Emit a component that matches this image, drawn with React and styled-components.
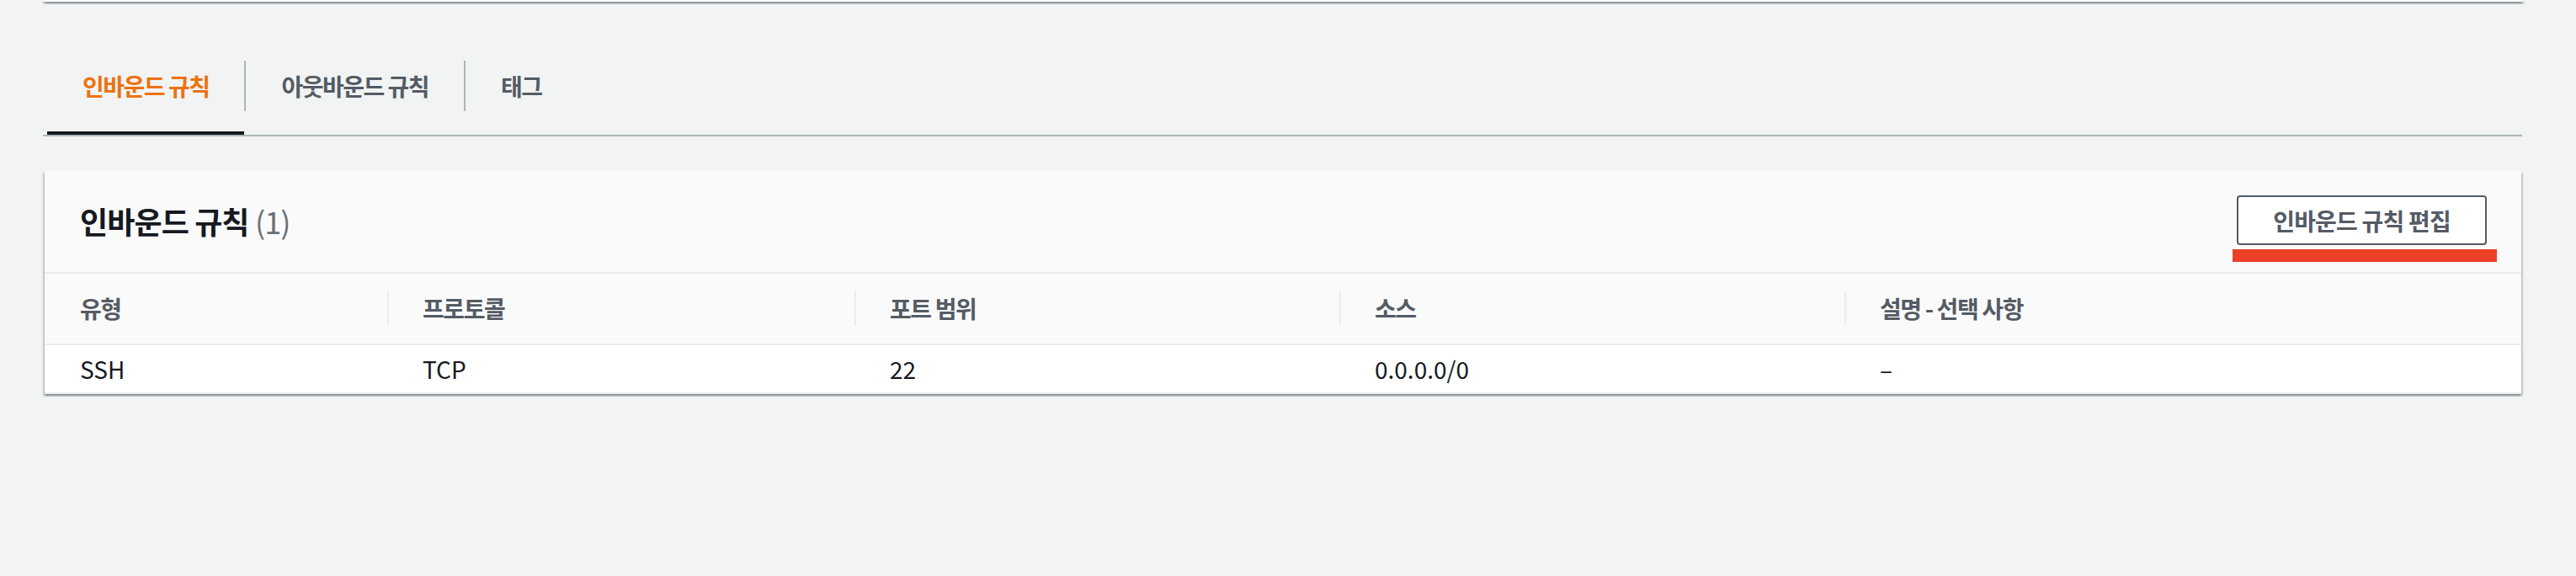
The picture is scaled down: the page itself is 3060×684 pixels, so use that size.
import React from "react";
import styled, { createGlobalStyle } from "styled-components";

const GlobalStyle = createGlobalStyle`
  html, body {
    margin: 0;
    padding: 0;
    background: #f2f3f3;
  }
  body {
    font-family: "Noto Sans CJK KR", "Noto Sans", sans-serif;
    color: #16191f;
  }
  * { box-sizing: border-box; }
`;

const Page = styled.div`
  width: 3060px;
  height: 684px;
  background: #f2f3f3;
  padding-left: 53px;
`;

const Column = styled.div`
  width: 2942px;
  display: flex;
  flex-direction: column;
`;

const TopCardEdge = styled.div`
  height: 2px;
  margin: 0 -2px 0 -1px;
  background: #ffffff;
  box-shadow: 0 2px 2px 0 rgba(0, 28, 36, 0.35),
    2px 2px 2px 0 rgba(0, 28, 36, 0.15),
    -2px 2px 2px 0 rgba(0, 28, 36, 0.15);
`;

const TabList = styled.div`
  display: flex;
  align-items: flex-start;
  margin: 50px -1px 0 -2px;
  padding-left: 5px;
  border-bottom: 2px solid #aab7b8;
`;

const Tab = styled.div`
  padding: 20px 42px 0;
  height: 108px;
  border-bottom: 4px solid ${(p) => (p.$active ? "#16191f" : "transparent")};
  font-size: 28px;
  font-weight: 700;
  line-height: 60px;
  letter-spacing: -1.5px;
  white-space: nowrap;
  color: ${(p) => (p.$active ? "#ec7211" : "#545b64")};
  cursor: pointer;
`;

const TabDivider = styled.div`
  width: 2px;
  height: 60px;
  margin-top: 20px;
  background: #aab7b8;
`;

const Card = styled.section`
  margin-top: 41px;
  background: #ffffff;
  box-shadow: 0 2px 2px 0 rgba(0, 28, 36, 0.3),
    2px 2px 2px 0 rgba(0, 28, 36, 0.15),
    -2px 2px 2px 0 rgba(0, 28, 36, 0.15);
`;

const CardHeader = styled.header`
  height: 122px;
  display: flex;
  align-items: center;
  justify-content: space-between;
  padding: 0 41px 2px 42px;
  background: #fafafa;
  border-bottom: 2px solid #eaeded;
`;

const Title = styled.h2`
  margin: 0;
  font-size: 36px;
  font-weight: 700;
  line-height: 44px;
  letter-spacing: -0.9px;
  color: #16191f;
`;

const Counter = styled.span`
  font-weight: 400;
  color: #687078;
`;

const ButtonWrap = styled.div`
  position: relative;
  margin-top: -1px;
`;

const Button = styled.button`
  height: 59px;
  padding: 0 41px;
  border: 2px solid #545b64;
  border-radius: 4px;
  background: #ffffff;
  font-family: inherit;
  font-size: 28px;
  font-weight: 700;
  letter-spacing: -0.8px;
  color: #545b64;
  cursor: pointer;
`;

const Highlight = styled.div`
  position: absolute;
  left: -5px;
  right: -12px;
  top: 64px;
  height: 15px;
  background: #ec4027;
`;

const Row = styled.div`
  display: grid;
  grid-template-columns: 407px 555px 576px 600px 1fr;
  align-items: center;
  background: ${(p) => (p.$head ? "#fafafa" : "#ffffff")};
  height: ${(p) => (p.$head ? "85px" : "58px")};
  border-bottom: 2px solid #eaeded;
`;

const HeadCell = styled.div`
  font-size: 28px;
  font-weight: 700;
  color: #545b64;
  line-height: 41px;
  letter-spacing: -1.4px;
  padding-left: ${(p) => (p.$first ? "42px" : "40px")};
  border-left: ${(p) => (p.$first ? "none" : "2px solid #eaeded")};
  white-space: nowrap;
`;

const Cell = styled.div`
  font-size: 28px;
  font-weight: 400;
  color: #16191f;
  line-height: 40px;
  padding-left: 42px;
  white-space: nowrap;
`;

const columns = ["유형", "프로토콜", "포트 범위", "소스", "설명 - 선택 사항"];
const rows = [["SSH", "TCP", "22", "0.0.0.0/0", "–"]];

export default function App() {
  return (
    <>
      <GlobalStyle />
      <Page>
        <Column>
          <TopCardEdge />
          <TabList>
            <Tab $active>인바운드 규칙</Tab>
            <TabDivider />
            <Tab>아웃바운드 규칙</Tab>
            <TabDivider />
            <Tab>태그</Tab>
          </TabList>
          <Card>
            <CardHeader>
              <Title>
                인바운드 규칙 <Counter>(1)</Counter>
              </Title>
              <ButtonWrap>
                <Button>인바운드 규칙 편집</Button>
                <Highlight />
              </ButtonWrap>
            </CardHeader>
            <Row $head>
              {columns.map((c, i) => (
                <HeadCell key={c} $first={i === 0}>
                  {c}
                </HeadCell>
              ))}
            </Row>
            {rows.map((r, ri) => (
              <Row key={ri}>
                {r.map((v, i) => (
                  <Cell key={i}>{v}</Cell>
                ))}
              </Row>
            ))}
          </Card>
        </Column>
      </Page>
    </>
  );
}
